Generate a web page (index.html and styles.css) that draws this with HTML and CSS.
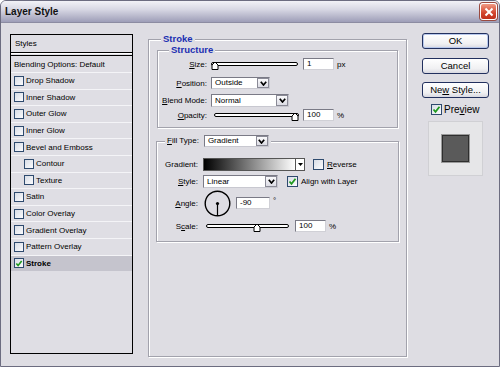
FILE: index.html
```html
<!DOCTYPE html>
<html lang="en">
<head>
  <meta charset="UTF-8">
  <title>Layer Style</title>
  <link rel="stylesheet" href="styles.css">
</head>
<body>

<div class="window">
  <div class="titlebar">
    <span class="title">Layer Style</span>
    <span class="close">
      <svg width="10" height="10" viewBox="0 0 10 10"><path d="M1.5 1.5 L8.5 8.5 M8.5 1.5 L1.5 8.5" stroke="#fff" stroke-width="2" fill="none"/></svg>
    </span>
  </div>

  <div class="body">
    <!-- left list of effects -->
    <div class="styles-list">
      <div class="list-head">Styles</div>
      <div class="list-item blend">Blending Options: Default</div>
      <div class="list-item"><span class="check"></span>Drop Shadow</div>
      <div class="list-item"><span class="check"></span>Inner Shadow</div>
      <div class="list-item"><span class="check"></span>Outer Glow</div>
      <div class="list-item"><span class="check"></span>Inner Glow</div>
      <div class="list-item"><span class="check"></span>Bevel and Emboss</div>
      <div class="list-item sub"><span class="check"></span>Contour</div>
      <div class="list-item sub"><span class="check"></span>Texture</div>
      <div class="list-item"><span class="check"></span>Satin</div>
      <div class="list-item"><span class="check"></span>Color Overlay</div>
      <div class="list-item"><span class="check"></span>Gradient Overlay</div>
      <div class="list-item"><span class="check"></span>Pattern Overlay</div>
      <div class="list-item selected"><span class="check"><svg width="9" height="9" viewBox="0 0 9 9"><path d="M1.5 4.5 L3.5 6.8 L7.5 1.8" stroke="#1f9a1f" stroke-width="1.8" fill="none"/></svg></span><b>Stroke</b></div>
    </div>

    <!-- stroke settings -->
    <div class="group stroke-group">
      <div class="group-title">Stroke</div>

      <div class="group structure">
        <div class="group-title">Structure</div>
        <div class="row size-row">
          <label><u>S</u>ize:</label>
          <svg class="slider" width="88" height="14" viewBox="0 0 88 14">
            <rect x="0.5" y="5.5" width="86" height="3" rx="1.5" fill="#fff" stroke="#000"/>
            <polygon points="1,12.5 1,8 4,5 7,8 7,12.5" fill="#fff" stroke="#000"/>
          </svg>
          <span class="input w31">1</span>
          <span class="unit">px</span>
        </div>
        <div class="row pos-row">
          <label><u>P</u>osition:</label>
          <div class="select w59"><span>Outside</span><i class="arrow"><svg width="7" height="5" viewBox="0 0 7 5"><polyline points="0.8,0.8 3.5,4 6.2,0.8" stroke="#000" stroke-width="1.7" fill="none"/></svg></i></div>
        </div>
        <div class="row blend-row">
          <label><u>B</u>lend Mode:</label>
          <div class="select w78"><span>Normal</span><i class="arrow"><svg width="7" height="5" viewBox="0 0 7 5"><polyline points="0.8,0.8 3.5,4 6.2,0.8" stroke="#000" stroke-width="1.7" fill="none"/></svg></i></div>
        </div>
        <div class="row opacity-row">
          <label><u>O</u>pacity:</label>
          <svg class="slider op" width="86" height="14" viewBox="0 0 86 14">
            <rect x="0.5" y="5.5" width="84" height="3" rx="1.5" fill="#fff" stroke="#000"/>
            <polygon points="78,12.5 78,8 81,5 84,8 84,12.5" fill="#fff" stroke="#000"/>
          </svg>
          <span class="input w31">100</span>
          <span class="unit">%</span>
        </div>
      </div>

      <div class="group fill">
        <div class="group-title fill-title">
          <label><u>F</u>ill Type:</label>
          <div class="select w65"><span>Gradient</span><i class="arrow"><svg width="7" height="5" viewBox="0 0 7 5"><polyline points="0.8,0.8 3.5,4 6.2,0.8" stroke="#000" stroke-width="1.7" fill="none"/></svg></i></div>
        </div>
        <div class="row grad-row">
          <label>Gradient:</label>
          <div class="gradient-pick"><span class="swatch"></span><i class="mini-arrow"><svg width="5" height="3" viewBox="0 0 5 3"><polygon points="0,0 5,0 2.5,3" fill="#000"/></svg></i></div>
          <span class="check box"></span>
          <span class="check-label"><u>R</u>everse</span>
        </div>
        <div class="row style-row">
          <label><u>S</u>tyle:</label>
          <div class="select w75"><span>Linear</span><i class="arrow"><svg width="7" height="5" viewBox="0 0 7 5"><polyline points="0.8,0.8 3.5,4 6.2,0.8" stroke="#000" stroke-width="1.7" fill="none"/></svg></i></div>
          <span class="check box align"><svg width="9" height="9" viewBox="0 0 9 9"><path d="M1.5 4.5 L3.5 6.8 L7.5 1.8" stroke="#1f9a1f" stroke-width="1.8" fill="none"/></svg></span>
          <span class="check-label">Align with Layer</span>
        </div>
        <div class="row angle-row">
          <label><u>A</u>ngle:</label>
          <svg class="dial" width="27" height="27" viewBox="0 0 27 27">
            <circle cx="13.5" cy="13.5" r="12.3" fill="none" stroke="#000" stroke-width="1.4"/>
            <line x1="13.5" y1="13.5" x2="13.5" y2="25" stroke="#000" stroke-width="1.2"/>
            <circle cx="13.5" cy="13.5" r="1.6" fill="#000"/>
          </svg>
          <span class="input w34">-90</span>
          <span class="unit deg">°</span>
        </div>
        <div class="row scale-row">
          <label>S<u>c</u>ale:</label>
          <svg class="slider sc" width="84" height="14" viewBox="0 0 84 14">
            <rect x="0.5" y="5.5" width="82" height="3" rx="1.5" fill="#fff" stroke="#000"/>
            <polygon points="48,12.5 48,8 51,5 54,8 54,12.5" fill="#fff" stroke="#000"/>
          </svg>
          <span class="input w31">100</span>
          <span class="unit">%</span>
        </div>
      </div>
    </div>

    <!-- buttons -->
    <div class="side">
      <div class="btn ok">OK</div>
      <div class="btn">Cancel</div>
      <div class="btn">Ne<u>w</u> Style...</div>
      <div class="preview-row">
        <span class="check box"><svg width="9" height="9" viewBox="0 0 9 9"><path d="M1.5 4.5 L3.5 6.8 L7.5 1.8" stroke="#1f9a1f" stroke-width="1.8" fill="none"/></svg></span>
        <span class="preview-label">Pre<u>v</u>iew</span>
      </div>
      <div class="preview-box"><span class="preview-square"></span></div>
    </div>
  </div>
</div>

</body>
</html>
```

FILE: styles.css
```css
body {
  margin: 0;
  padding: 0;
  font-family: 'Liberation Sans', Arial, sans-serif;
  font-size: 8px;
  color: #000;
  background: #fff;
}
.window {
  width: 500px;
  height: 367px;
  box-sizing: border-box;
  border: 1px solid #6c6c80;
  border-radius: 6px 6px 0 0;
  background: #dedde3;
  overflow: hidden;
}
.titlebar {
  height: 21px;
  display: flex;
  align-items: center;
  justify-content: space-between;
  padding: 0 2px 0 4px;
  background: linear-gradient(to bottom, #f2f2f7 0%, #d8d8e4 40%, #b6b6ca 75%, #9e9eb8 100%);
  border-bottom: 1px solid #8c8ca2;
  box-sizing: border-box;
  height: 22px;
}
.title {
  font-size: 10px;
  font-weight: bold;
  color: #111;
}
.close {
  width: 17px;
  height: 17px;
  box-sizing: border-box;
  border: 1px solid #fff;
  border-radius: 3px;
  background: linear-gradient(to bottom, #f09a84, #d2452e 60%, #c0301c);
  display: flex;
  align-items: center;
  justify-content: center;
  box-shadow: 0 0 0 1px #9a4a40;
}
.body {
  display: flex;
  align-items: flex-start;
  padding-left: 9px;
}

/* effects list */
.styles-list {
  width: 123px;
  height: 320px;
  margin-top: 11px;
  box-sizing: border-box;
  border: 1px solid #000;
  background: #dfdee4;
}
.list-head {
  height: 17px;
  line-height: 17px;
  padding-left: 4px;
  border-bottom: 1px solid #000;
  box-shadow: 0 1px 0 #fff;
  margin-bottom: 2px;
  border-top: 0;
}
.list-item {
  height: 15.6px;
  display: flex;
  align-items: center;
  padding-left: 3px;
  border-top: 1px solid #f4f4f7;
}
.list-item.blend {
  height: 16px;
  border-top: 1px solid #000;
  padding-left: 3px;
}
.list-item.sub {
  padding-left: 13px;
}
.list-item.selected {
  background: #c5c4cd;
}
.list-item b {
  font-weight: bold;
}
.check {
  width: 10px;
  height: 10px;
  box-sizing: border-box;
  border: 1px solid #2e4a6e;
  background: linear-gradient(135deg, #d8dde6, #fbfbfd);
  margin-right: 2px;
  display: inline-flex;
  align-items: center;
  justify-content: center;
  flex: none;
}
.check.box {
  width: 11px;
  height: 11px;
  margin-right: 0;
}

/* group boxes */
.group {
  box-sizing: border-box;
  border: 1px solid #a2a2ac;
  box-shadow: inset 1px 1px 0 #fff, 1px 1px 0 #fff;
}
.stroke-group {
  width: 259px;
  height: 318px;
  margin-top: 16px;
  margin-left: 15px;
}
.group-title {
  width: max-content;
  line-height: 12px;
  margin: -7px 0 0 12px;
  padding: 0 2px;
  background: #dedde3;
  color: #1b2fb2;
  font-weight: bold;
  font-size: 9.5px;
}
.structure {
  width: 241px;
  margin: 5px 0 0 8px;
  padding-bottom: 5px;
}
.structure .group-title {
  margin-left: 11px;
}
.row {
  display: flex;
  align-items: center;
  height: 14px;
}
.row label {
  text-align: right;
  flex: none;
}
.structure .row label {
  width: 49px;
  margin-right: 4px;
}
.size-row { margin-top: 1px; }
.pos-row { margin-top: 5px; }
.blend-row { margin-top: 3px; }
.opacity-row { margin-top: 1px; }
.slider {
  flex: none;
  margin-right: 4px;
}
.slider.op {
  margin-left: 3px;
  margin-right: 3px;
}
.input {
  height: 12px;
  box-sizing: border-box;
  border: 1px solid #7a7a86;
  border-right-color: #d0d0d6;
  border-bottom-color: #d0d0d6;
  background: #fff;
  line-height: 10px;
  padding-left: 3px;
  flex: none;
}
.w31 { width: 31px; }
.w34 { width: 34px; }
.unit {
  margin-left: 3px;
}
.select {
  height: 13px;
  box-sizing: border-box;
  display: flex;
  border: 1px solid #7a7a86;
  border-right-color: #c8c8d0;
  border-bottom-color: #c8c8d0;
  background: #fff;
  flex: none;
}
.select span {
  flex: 1;
  line-height: 11px;
  padding-left: 3px;
}
.select .arrow {
  width: 12px;
  box-sizing: border-box;
  border: 1px solid #8a8a96;
  background: linear-gradient(to bottom, #fafafc, #dcdce4);
  display: flex;
  align-items: center;
  justify-content: center;
}
.w59 { width: 59px; height: 12px; }
.w59 span { line-height: 10px; }
.w78 { width: 78px; }
.w65 { width: 65px; height: 12px; }
.w65 span { line-height: 10px; }
.w75 { width: 75px; }

/* fill group */
.fill {
  width: 243px;
  margin: 13px 0 0 7px;
  padding-bottom: 8px;
}
.fill-title {
  display: flex;
  align-items: center;
  height: 14px;
  line-height: 14px;
  margin: -8px 0 0 8px;
  color: #000;
  font-weight: normal;
  font-size: 8px;
}
.fill-title label {
  margin-right: 5px;
}
.fill .row label {
  width: 41px;
  margin-right: 5px;
}
.grad-row { margin-top: 9px; }
.style-row { margin-top: 3px; }
.angle-row { margin-top: 2px; height: 26px; }
.scale-row { margin-top: 3px; }
.gradient-pick {
  display: flex;
  width: 102px;
  height: 13px;
  box-sizing: border-box;
  border: 1px solid #555;
  flex: none;
  margin-right: 8px;
}
.gradient-pick .swatch {
  flex: 1;
  background: linear-gradient(to right, #000, #fff);
}
.mini-arrow {
  width: 8px;
  border-left: 1px solid #555;
  background: #fff;
  display: flex;
  align-items: center;
  justify-content: center;
}
.check-label {
  margin-left: 3px;
}
.check.align {
  margin-left: 9px;
}
.dial {
  flex: none;
  margin-left: 1px;
  margin-right: 5px;
}
.deg {
  align-self: flex-start;
  margin-top: 6px;
}
.slider.sc {
  margin-left: 3px;
  margin-right: 5px;
}

/* right side buttons */
.side {
  width: 67px;
  margin: 10px 0 0 15px;
}
.btn {
  height: 16px;
  box-sizing: border-box;
  border: 1px solid #22305e;
  border-radius: 3px;
  background: linear-gradient(to bottom, #ffffff, #f0f0f2 70%, #d8d8e0);
  text-align: center;
  line-height: 14px;
  font-size: 9.5px;
  margin-bottom: 8px;
}
.btn.ok {
  margin-bottom: 9px;
  box-shadow: inset 0 0 0 1px #b8c8ec;
}
.preview-row {
  display: flex;
  align-items: center;
  height: 12px;
  margin-top: -3px;
  padding-left: 9px;
}
.preview-label {
  font-size: 10px;
  margin-left: 2px;
}
.preview-box {
  width: 55px;
  height: 55px;
  margin: 6px 0 0 6px;
  box-sizing: border-box;
  background: #e6e6e8;
  border: 1px solid #d0d0d4;
  display: flex;
  align-items: center;
  justify-content: center;
}
.preview-square {
  width: 27px;
  height: 27px;
  box-sizing: border-box;
  background: #5a5a5a;
  border: 1px solid #2e2e2e;
  box-shadow: 0 0 0 1px #9a9a9a;
}
```
